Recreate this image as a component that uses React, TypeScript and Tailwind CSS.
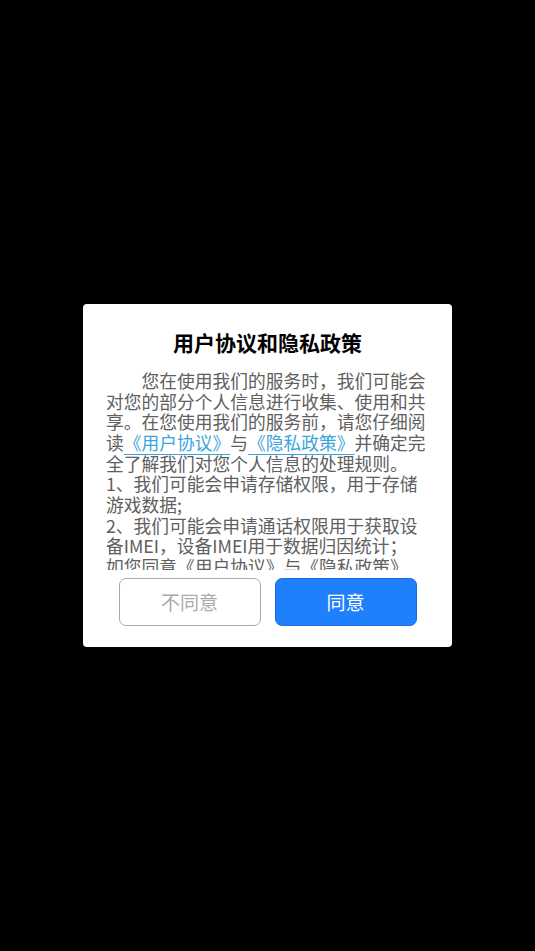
export default function App() {
  return (
    <div
      className="min-h-[951px] w-full bg-black flex items-center justify-center"
      style={{ fontFamily: '"Noto Sans CJK SC", "Noto Sans", sans-serif' }}
    >
      <div className="w-[369px] bg-white rounded-[4px] pt-[23px] pb-[21px] flex flex-col items-center">
        <h1 className="text-[21px] leading-[30px] font-bold text-black">用户协议和隐私政策</h1>

        <div className="mt-[13px] w-[323px] h-[200px] overflow-hidden text-[17.75px] leading-[20.65px] text-[#606060]">
          <p className="indent-[2em]">
            您在使用我们的服务时，我们可能会对您的部分个人信息进行收集、使用和共享。在您使用我们的服务前，请您仔细阅读
            <span className="text-[#3aa5dc] underline underline-offset-[4px]">《用户协议》</span>与
            <span className="text-[#3aa5dc] underline underline-offset-[4px]">《隐私政策》</span>
            并确定完全了解我们对您个人信息的处理规则。
          </p>
          <p>1、我们可能会申请存储权限，用于存储游戏数据;</p>
          <p>2、我们可能会申请通话权限用于获取设备IMEI，设备IMEI用于数据归因统计；</p>
          <p>如您同意《用户协议》与《隐私政策》，请点击“同意”开始使用我们的产品和服务。</p>
        </div>

        <div className="mt-[8px] flex gap-[14px]">
          <button className="w-[142px] h-[48px] rounded-[7px] border border-[#aaaaaa] bg-white text-[19px] text-[#aaaaaa]">
            不同意
          </button>
          <button className="w-[142px] h-[48px] rounded-[7px] border border-[#1a6fe0] bg-[#1f80fb] text-[19px] text-white">
            同意
          </button>
        </div>
      </div>
    </div>
  );
}
